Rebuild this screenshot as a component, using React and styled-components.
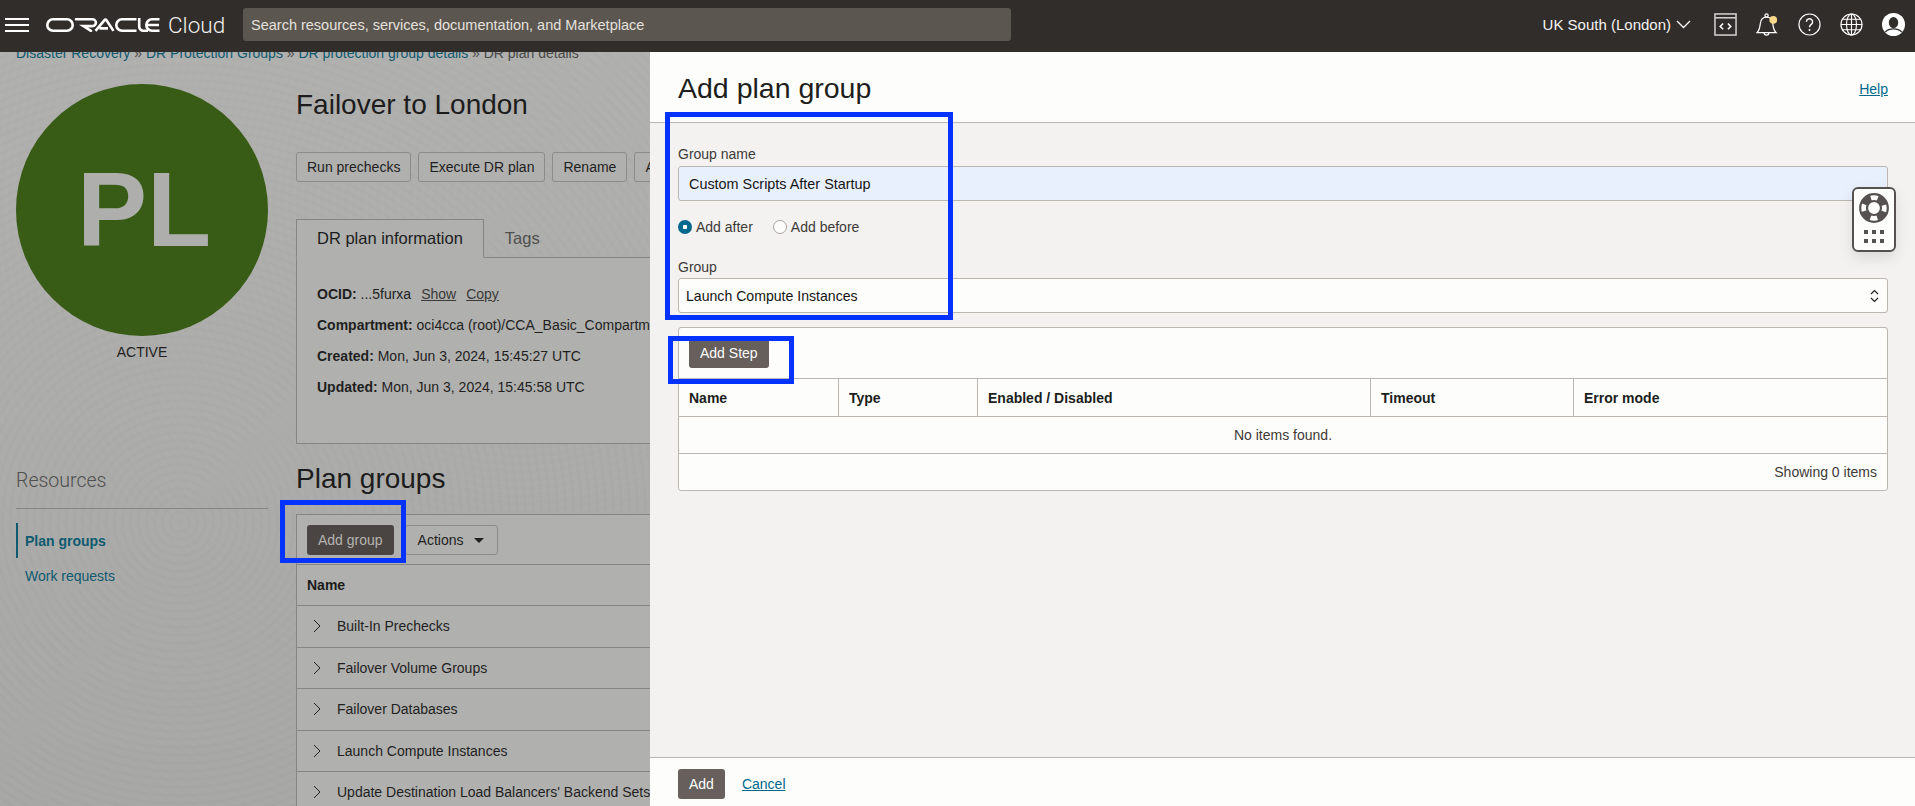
import React from "react";
import styled, { createGlobalStyle } from "styled-components";

const GlobalStyle = createGlobalStyle`
	* {
		box-sizing: border-box;
	}
	html,
	body {
		margin: 0;
		padding: 0;
		background: #adadab;
	}
	body {
		font-family: "Liberation Sans", Arial, sans-serif;
		font-size: 14px;
		color: #222;
	}
`;

const planGroups = [
	"Built-In Prechecks",
	"Failover Volume Groups",
	"Failover Databases",
	"Launch Compute Instances",
	"Update Destination Load Balancers' Backend Sets",
];

const stepColumns = ["Name", "Type", "Enabled / Disabled", "Timeout", "Error mode"];

function OracleLogo() {
	return (
		<LogoSvg viewBox="0 0 114 14" fill="none" stroke="#fff" strokeWidth="2.6">
			<rect x="1.3" y="1.3" width="25.4" height="11.4" rx="5.7" />
			<path d="M30 1.3H46.5a3.3 3.3 0 0 1 0 6.8H37.5L45 12.8" strokeLinecap="round" />
			<path d="M49.5 12.9L58.5 2.2a1.2 1.2 0 0 1 2 0L67.5 12.9M53.5 10.4H62" />
			<path d="M90.5 1.3H76a5.7 5.7 0 0 0 0 11.4H90.5" />
			<path d="M93.2 0V8.5a4.2 4.2 0 0 0 4.2 4.2H102" />
			<path d="M113.5 1.3H106a5.7 5.7 0 0 0 0 11.4H113.5M101.5 7H113" />
		</LogoSvg>
	);
}

function ConsoleIcon() {
	return (
		<TopIcon viewBox="0 0 24 24" fill="none" stroke="#d0d0ce" strokeWidth="1.6">
			<rect x="1" y="1" width="22" height="22" />
			<path d="M1 5H23" />
			<path d="M9.5 11L6.5 14L9.5 17M14.5 11L17.5 14L14.5 17" stroke="#fff" />
		</TopIcon>
	);
}

function BellIcon() {
	return (
		<TopIcon viewBox="0 0 24 24" fill="none" stroke="#fff" strokeWidth="1.3">
			<circle cx="11" cy="2.6" r="1.7" />
			<path d="M1 20.5H21C18.2 18 18 15.5 17.5 11C17.1 7 14.8 4.2 11 4.2C7.2 4.2 4.9 7 4.5 11C4 15.5 3.8 18 1 20.5Z" />
			<path d="M8.5 20.5a2.5 2.5 0 0 0 5 0" />
			<circle cx="18" cy="7.2" r="4" fill="#fbd98a" stroke="none" />
		</TopIcon>
	);
}

function HelpIcon() {
	return (
		<TopIcon viewBox="0 0 24 24" fill="none" stroke="#fff" strokeWidth="1.2">
			<circle cx="12" cy="12" r="11" />
			<path d="M8.8 9.2a3.2 3.2 0 1 1 5 2.7c-1.2.8-1.8 1.4-1.8 2.9" strokeWidth="1.5" />
			<circle cx="12" cy="17.8" r="1" fill="#fff" stroke="none" />
		</TopIcon>
	);
}

function GlobeIcon() {
	return (
		<TopIcon viewBox="0 0 24 24" fill="none" stroke="#fff" strokeWidth="1.2">
			<circle cx="12" cy="12" r="11" />
			<ellipse cx="12" cy="12" rx="5.2" ry="11" />
			<path d="M12 1V23M1 12H23M2.8 6.5H21.2M2.8 17.5H21.2" />
		</TopIcon>
	);
}

function UserIcon() {
	return (
		<TopIcon viewBox="0 0 24 24">
			<circle cx="12" cy="12" r="12" fill="#fff" />
			<ellipse cx="12" cy="10" rx="4.9" ry="5.8" fill="#312d2a" />
			<path d="M3.5 19.8C6 17.2 8.8 16.6 12 16.6S18 17.2 20.5 19.8" fill="none" stroke="#312d2a" strokeWidth="1.4" />
		</TopIcon>
	);
}

function RowChevron() {
	return (
		<ChevronSvg viewBox="0 0 8 14" fill="none" stroke="#222" strokeWidth="1">
			<path d="M1 1L7 7L1 13" />
		</ChevronSvg>
	);
}

function SupportWidget() {
	return (
		<Widget>
			<svg width="30" height="30" viewBox="0 0 30 30" fill="none" stroke="#55514e">
				<circle cx="15" cy="15" r="13.8" strokeWidth="2.2" />
				<circle cx="15" cy="15" r="7" strokeWidth="2.2" />
				<circle cx="15" cy="15" r="10.4" strokeWidth="6" strokeDasharray="9.4 6.94" strokeDashoffset="-3.5" />
			</svg>
			<WidgetDots>
				{[0, 1, 2, 3, 4, 5].map((n) => (
					<WidgetDot key={n} />
				))}
			</WidgetDots>
		</Widget>
	);
}

export default function App() {
	return (
		<>
			<GlobalStyle />
			<Page>
				<TopBar>
					<MenuButton>
						<MenuLine />
						<MenuLine />
						<MenuLine />
					</MenuButton>
					<OracleLogo />
					<CloudText>Cloud</CloudText>
					<SearchBox>Search resources, services, documentation, and Marketplace</SearchBox>
					<TopRight>
						<Region>
							UK South (London)
							<svg width="15" height="9" viewBox="0 0 15 9" fill="none" stroke="#fff" strokeWidth="1.3">
								<path d="M1 1L7.5 7.5L14 1" />
							</svg>
						</Region>
						<IconRow>
							<ConsoleIcon />
							<BellIcon />
							<HelpIcon />
							<GlobeIcon />
							<UserIcon />
						</IconRow>
					</TopRight>
				</TopBar>

				<Content>
					<Breadcrumb>
						<CrumbLink>Disaster Recovery</CrumbLink> » <CrumbLink>DR Protection Groups</CrumbLink> »{" "}
						<CrumbLink>DR protection group details</CrumbLink> » DR plan details
					</Breadcrumb>
					<Columns>
						<LeftCol>
							<Avatar>PL</Avatar>
							<Status>ACTIVE</Status>
							<ResourcesTitle>Resources</ResourcesTitle>
							<SideNav>
								<SideItem $active>Plan groups</SideItem>
								<SideItem>Work requests</SideItem>
							</SideNav>
						</LeftCol>
						<MainCol>
							<PageTitle>Failover to London</PageTitle>
							<ActionRow>
								<GhostButton>Run prechecks</GhostButton>
								<GhostButton>Execute DR plan</GhostButton>
								<GhostButton>Rename</GhostButton>
								<GhostButton>Add tags</GhostButton>
							</ActionRow>
							<Tabs>
								<Tab $active>DR plan information</Tab>
								<Tab>Tags</Tab>
							</Tabs>
							<InfoBox>
								<InfoLine>
									<b>OCID:</b> ...5furxa
									<InfoLink>Show</InfoLink>
									<InfoLink>Copy</InfoLink>
								</InfoLine>
								<InfoLine>
									<b>Compartment:</b> oci4cca (root)/CCA_Basic_Compartment
								</InfoLine>
								<InfoLine>
									<b>Created:</b> Mon, Jun 3, 2024, 15:45:27 UTC
								</InfoLine>
								<InfoLine>
									<b>Updated:</b> Mon, Jun 3, 2024, 15:45:58 UTC
								</InfoLine>
							</InfoBox>
							<SectionTitle>Plan groups</SectionTitle>
							<GroupsTable>
								<GroupsToolbar>
									<DarkButton>Add group</DarkButton>
									<ActionsButton>
										Actions
										<Caret />
									</ActionsButton>
								</GroupsToolbar>
								<GroupsHead>Name</GroupsHead>
								{planGroups.map((group) => (
									<GroupRow key={group}>
										<RowChevron />
										{group}
									</GroupRow>
								))}
							</GroupsTable>
						</MainCol>
					</Columns>
				</Content>

				<Drawer>
					<DrawerHeader>
						<DrawerTitle>Add plan group</DrawerTitle>
						<TealLink>Help</TealLink>
					</DrawerHeader>
					<DrawerBody>
						<FieldLabel>Group name</FieldLabel>
						<TextInput readOnly value="Custom Scripts After Startup" />
						<RadioRow>
							<RadioItem>
								<Radio $checked />
								Add after
							</RadioItem>
							<RadioItem>
								<Radio />
								Add before
							</RadioItem>
						</RadioRow>
						<GroupLabel>Group</GroupLabel>
						<SelectBox>
							Launch Compute Instances
							<svg width="9" height="14" viewBox="0 0 9 14" fill="none" stroke="#222" strokeWidth="1.2">
								<path d="M1 5L4.5 1.5L8 5M1 9L4.5 12.5L8 9" />
							</svg>
						</SelectBox>
						<StepsTable>
							<StepsToolbar>
								<StepButton>Add Step</StepButton>
							</StepsToolbar>
							<StepsHead>
								{stepColumns.map((column) => (
									<StepsHeadCell key={column}>{column}</StepsHeadCell>
								))}
							</StepsHead>
							<EmptyRow>No items found.</EmptyRow>
							<StepsFooter>Showing 0 items</StepsFooter>
						</StepsTable>
					</DrawerBody>
					<DrawerFooter>
						<StepButton>Add</StepButton>
						<TealLink>Cancel</TealLink>
					</DrawerFooter>
				</Drawer>

				<SupportWidget />

				<Callout $x={665} $y={112} $w={288} $h={208} />
				<Callout $x={668} $y={336} $w={126} $h={48} />
				<Callout $x={280} $y={500} $w={126} $h={63} />
			</Page>
		</>
	);
}

const Page = styled.div`
	position: relative;
	width: 1915px;
	height: 806px;
	overflow: hidden;
`;

const TopBar = styled.header`
	position: relative;
	z-index: 2;
	display: flex;
	align-items: center;
	height: 52px;
	padding: 0 10px 3px 5px;
	background: #312d2a;
	color: #fff;
`;
const MenuButton = styled.div`
	display: flex;
	flex-direction: column;
	justify-content: space-between;
	width: 24px;
	height: 14px;
	margin-right: 17px;
`;
const MenuLine = styled.span`
	display: block;
	height: 2px;
	background: #fff;
`;
const LogoSvg = styled.svg`
	width: 114px;
	height: 14px;
	margin: 1px 8px 0 0;
`;
const CloudText = styled.span`
	width: 75px;
	font-family: Roboto, "Liberation Sans", sans-serif;
	font-size: 22.5px;
	font-weight: 300;
	color: #f1efed;
`;
const SearchBox = styled.div`
	display: flex;
	align-items: center;
	width: 768px;
	height: 33px;
	padding-left: 8px;
	border-radius: 3px;
	background: #5b5650;
	font-size: 14.5px;
	color: #e4e1dd;
`;
const TopRight = styled.div`
	display: flex;
	align-items: center;
	margin-left: auto;
`;
const Region = styled.div`
	display: flex;
	align-items: center;
	gap: 5px;
	margin-right: 23px;
	font-size: 15px;
	color: #f4f3f1;
`;
const IconRow = styled.div`
	display: flex;
	align-items: center;
	gap: 19px;
`;
const TopIcon = styled.svg`
	display: block;
	width: 23px;
	height: 23px;
`;

const Content = styled.main`
	height: 754px;
	overflow: hidden;
	padding-left: 16px;
	background-color: #abacaa;
	background-image:
		repeating-radial-gradient(circle at 180px 470px, rgba(0, 0, 0, 0.012) 0 3px, transparent 3px 8px),
		repeating-radial-gradient(circle at 520px 150px, rgba(255, 255, 255, 0.014) 0 3px, transparent 3px 8px),
		linear-gradient(180deg, #b0b0ae 0%, #a7a7a5 100%);
`;
const Breadcrumb = styled.nav`
	margin-top: -7px;
	line-height: 16px;
	font-size: 14px;
	color: #4a4a49;
`;
const CrumbLink = styled.span`
	color: #0f5a70;
`;
const Columns = styled.div`
	display: flex;
	gap: 28px;
	margin-top: 23px;
`;
const LeftCol = styled.aside`
	flex: none;
	width: 252px;
`;
const Avatar = styled.div`
	display: flex;
	align-items: center;
	justify-content: center;
	width: 252px;
	height: 252px;
	padding-left: 4px;
	border-radius: 50%;
	background: #385c16;
	font-size: 105px;
	font-weight: 700;
	color: #aeaeac;
`;
const Status = styled.div`
	margin-top: 8px;
	line-height: 16px;
	text-align: center;
	font-size: 14px;
	color: #1f1f1f;
`;
const ResourcesTitle = styled.h3`
	margin: 109px 0 0;
	padding-bottom: 15px;
	border-bottom: 1px solid #858583;
	line-height: 24px;
	font-family: Roboto, "Liberation Sans", sans-serif;
	font-size: 19.5px;
	font-weight: 300;
	color: #4f4f4e;
`;
const SideNav = styled.ul`
	margin: 14px 0 0;
	padding: 0;
	list-style: none;
`;
const SideItem = styled.li`
	display: flex;
	align-items: center;
	height: 35px;
	padding-left: 7px;
	border-left: 2px solid ${(p) => (p.$active ? "#0f5a70" : "transparent")};
	font-size: 14px;
	font-weight: ${(p) => (p.$active ? 700 : 400)};
	color: #0f5a70;
`;

const MainCol = styled.section`
	flex: none;
	width: 760px;
`;
const PageTitle = styled.h1`
	margin: 4px 0 0;
	line-height: 34px;
	font-size: 28px;
	font-weight: 400;
	color: #1c1c1c;
`;
const ActionRow = styled.div`
	display: flex;
	gap: 7px;
	margin-top: 30px;
`;
const GhostButton = styled.button`
	display: flex;
	align-items: center;
	height: 30px;
	padding: 0 10px;
	border: 1px solid #8b8b89;
	border-radius: 3px;
	background: #b0b0ae;
	font-family: inherit;
	font-size: 14px;
	color: #1f1f1f;
`;
const ActionsButton = styled(GhostButton)`
	padding: 0 13px 0 12px;
`;
const Caret = styled.span`
	margin-left: 10px;
	border-top: 5px solid #1f1f1f;
	border-left: 5px solid transparent;
	border-right: 5px solid transparent;
`;
const Tabs = styled.div`
	display: flex;
	height: 39px;
	margin-top: 37px;
	border-bottom: 1px solid #858583;
`;
const Tab = styled.div`
	display: flex;
	align-items: center;
	height: 39px;
	padding: 0 20px;
	font-size: 16.5px;
	font-weight: ${(p) => (p.$active ? 500 : 400)};
	color: ${(p) => (p.$active ? "#1c1c1c" : "#4f4f4e")};
	background: ${(p) => (p.$active ? "#b0b0ae" : "transparent")};
	border: 1px solid ${(p) => (p.$active ? "#858583" : "transparent")};
	border-bottom: 1px solid ${(p) => (p.$active ? "#b0b0ae" : "transparent")};
`;
const InfoBox = styled.div`
	display: flex;
	flex-direction: column;
	gap: 11px;
	height: 186px;
	padding: 26px 0 0 20px;
	border: 1px solid #858583;
	border-top: 0;
	background: #b0b0ae;
`;
const InfoLine = styled.div`
	line-height: 20px;
	font-size: 14px;
	white-space: nowrap;
	color: #1f1f1f;
`;
const InfoLink = styled.span`
	margin-left: 10px;
	text-decoration: underline;
	color: #3a3a39;
`;
const SectionTitle = styled.h2`
	margin: 18px 0 0;
	line-height: 34px;
	font-size: 28px;
	font-weight: 400;
	color: #1c1c1c;
`;
const GroupsTable = styled.div`
	margin-top: 18px;
	border: 1px solid #858583;
	background: #b0b0ae;
`;
const GroupsToolbar = styled.div`
	display: flex;
	gap: 11px;
	height: 50px;
	padding: 10px;
	border-bottom: 1px solid #858583;
`;
const DarkButton = styled.button`
	height: 30px;
	padding: 0 11px;
	border: 0;
	border-radius: 3px;
	background: #4a4542;
	font-family: inherit;
	font-size: 14px;
	color: #b5b3b1;
`;
const GroupsHead = styled.div`
	display: flex;
	align-items: center;
	height: 41px;
	padding-left: 10px;
	border-bottom: 1px solid #858583;
	font-size: 14px;
	font-weight: 700;
	color: #1c1c1c;
`;
const GroupRow = styled.div`
	display: flex;
	align-items: center;
	height: 41.5px;
	padding-left: 16px;
	border-bottom: 1px solid #858583;
	font-size: 14px;
	white-space: nowrap;
	color: #1f1f1f;
`;
const ChevronSvg = styled.svg`
	flex: none;
	width: 8px;
	height: 14px;
	margin-right: 16px;
`;

const Drawer = styled.aside`
	position: absolute;
	top: 52px;
	left: 650px;
	right: 0;
	bottom: 0;
	display: flex;
	flex-direction: column;
	background: #f3f2f0;
`;
const DrawerHeader = styled.div`
	display: flex;
	align-items: center;
	justify-content: space-between;
	height: 71px;
	padding: 3px 27px 0 28px;
	border-bottom: 1px solid #bcb6b1;
	background: #fdfdfb;
`;
const DrawerTitle = styled.h2`
	margin: 0;
	font-size: 28.5px;
	font-weight: 400;
	color: #201e1c;
`;
const TealLink = styled.a`
	font-size: 14px;
	text-decoration: underline;
	color: #00688c;
`;
const DrawerBody = styled.div`
	flex: 1;
	padding: 21px 27px 0 28px;
`;
const FieldLabel = styled.label`
	display: block;
	line-height: 20px;
	font-size: 14px;
	color: #3d3a37;
`;
const GroupLabel = styled(FieldLabel)`
	margin-top: 20px;
`;
const TextInput = styled.input`
	display: block;
	width: 100%;
	height: 35px;
	margin-top: 2px;
	padding: 0 10px;
	border: 1px solid #bcb6b1;
	border-radius: 3px;
	outline: 0;
	background: #e8f0fe;
	font-family: inherit;
	font-size: 14.4px;
	color: #161513;
`;
const RadioRow = styled.div`
	display: flex;
	gap: 20px;
	margin-top: 16px;
`;
const RadioItem = styled.div`
	display: flex;
	align-items: center;
	gap: 4px;
	line-height: 20px;
	font-size: 14px;
	color: #3d3a37;
`;
const Radio = styled.span`
	flex: none;
	width: 14px;
	height: 14px;
	border-radius: 50%;
	background: ${(p) =>
		p.$checked
			? "radial-gradient(circle, #fff 0 2px, #00688c 2.6px)"
			: "#fdfdfb"};
	border: ${(p) => (p.$checked ? "0" : "1px solid #a9a39e")};
`;
const SelectBox = styled.div`
	display: flex;
	align-items: center;
	justify-content: space-between;
	height: 35px;
	margin-top: 1px;
	padding: 0 8px 0 7px;
	border: 1px solid #bcb6b1;
	border-radius: 3px;
	background: #fdfdfb;
	font-size: 14.1px;
	color: #161513;
`;
const StepsTable = styled.div`
	margin-top: 14px;
	border: 1px solid #bcb6b1;
	border-radius: 3px;
	background: #fdfdfb;
`;
const StepsToolbar = styled.div`
	height: 51px;
	padding: 10px;
	border-bottom: 1px solid #bcb6b1;
`;
const StepButton = styled.button`
	height: 30px;
	padding: 0 11px;
	border: 0;
	border-radius: 3px;
	background: #665f5b;
	font-family: inherit;
	font-size: 14px;
	color: #fdfdfb;
`;
const StepsHead = styled.div`
	display: grid;
	grid-template-columns: 160px 139px 393px 203px 1fr;
	height: 38px;
	border-bottom: 1px solid #bcb6b1;
`;
const StepsHeadCell = styled.div`
	display: flex;
	align-items: center;
	padding-left: 10px;
	border-right: 1px solid #bcb6b1;
	font-size: 14px;
	font-weight: 700;
	color: #201e1c;

	&:last-child {
		border-right: 0;
	}
`;
const EmptyRow = styled.div`
	display: flex;
	align-items: center;
	justify-content: center;
	height: 37px;
	border-bottom: 1px solid #bcb6b1;
	font-size: 14px;
	color: #3d3a37;
`;
const StepsFooter = styled.div`
	display: flex;
	align-items: center;
	justify-content: flex-end;
	height: 36px;
	padding-right: 10px;
	font-size: 14px;
	color: #3d3a37;
`;
const DrawerFooter = styled.div`
	display: flex;
	align-items: flex-start;
	gap: 17px;
	height: 49px;
	padding: 11px 0 0 28px;
	border-top: 1px solid #bcb6b1;
	background: #fdfdfb;

	${TealLink} {
		margin-top: 7px;
	}
`;

const Widget = styled.div`
	position: absolute;
	top: 187px;
	left: 1852px;
	display: flex;
	flex-direction: column;
	align-items: center;
	gap: 7px;
	width: 44px;
	height: 65px;
	padding-top: 4px;
	border: 2px solid #55514e;
	border-radius: 6px;
	background: #fdfdfb;
	box-shadow: 0 6px 14px rgba(0, 0, 0, 0.1);
`;
const WidgetDots = styled.div`
	display: grid;
	grid-template-columns: repeat(3, 4px);
	gap: 5px 4px;
`;
const WidgetDot = styled.span`
	width: 4px;
	height: 4px;
	background: #55514e;
`;

const Callout = styled.div`
	position: absolute;
	left: ${(p) => p.$x}px;
	top: ${(p) => p.$y}px;
	width: ${(p) => p.$w}px;
	height: ${(p) => p.$h}px;
	border: 5px solid #0433ff;
	pointer-events: none;
`;
